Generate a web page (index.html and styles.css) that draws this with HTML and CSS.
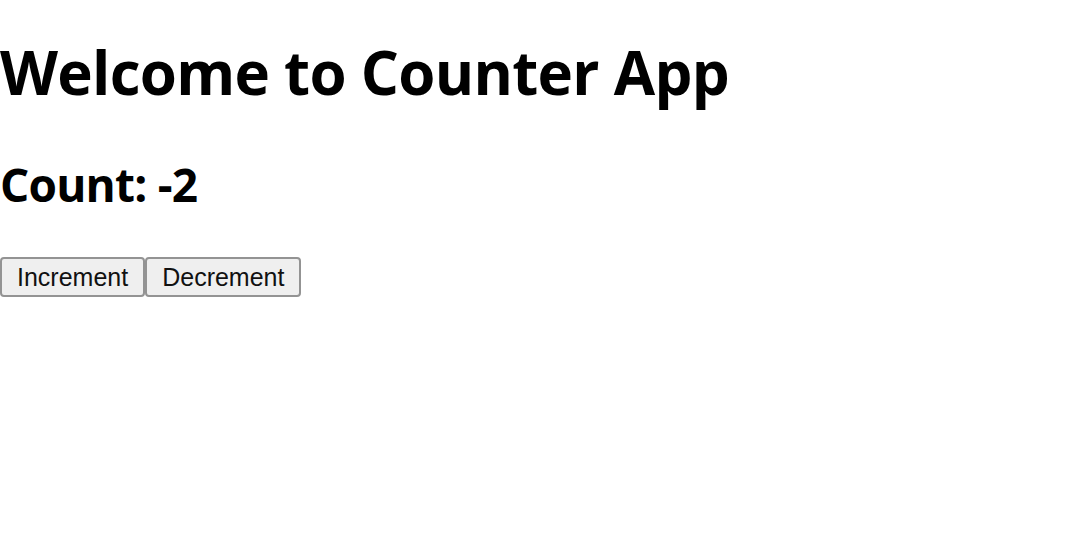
FILE: index.html
```html
<!DOCTYPE html>
<html>
<head>
<meta charset="utf-8">
<link rel="stylesheet" href="styles.css">
</head>
<body>
<div class="app">
  <h1 class="title">Welcome to Counter App</h1>
  <h2 class="count">Count: -2</h2>
  <div class="buttons">
    <button class="btn">Increment</button><button class="btn">Decrement</button>
  </div>
</div>
</body>
</html>
```

FILE: styles.css
```css
html, body {
  margin: 0;
  padding: 0;
  background: #ffffff;
}
.app {
  display: flex;
  flex-direction: column;
  align-items: flex-start;
  padding-top: 35px;
}
.title {
  margin: 0;
  font-family: "Open Sans", "Noto Sans", sans-serif;
  font-weight: 700;
  font-size: 60px;
  line-height: 74px;
  color: #000;
  letter-spacing: -0.7px;
}
.count {
  margin: 0;
  margin-top: 47px;
  font-family: "Open Sans", "Noto Sans", sans-serif;
  font-weight: 700;
  font-size: 46px;
  line-height: 56px;
  color: #000;
  letter-spacing: -0.8px;
}
.buttons {
  display: flex;
  margin-top: 45px;
}
.btn {
  font-family: "Liberation Sans", Arial, sans-serif;
  font-size: 25px;
  color: #111;
  background: #efefef;
  border: 2px solid #939393;
  border-radius: 4px;
  height: 40px;
  padding: 0 15px;
  margin: 0;
}
```
